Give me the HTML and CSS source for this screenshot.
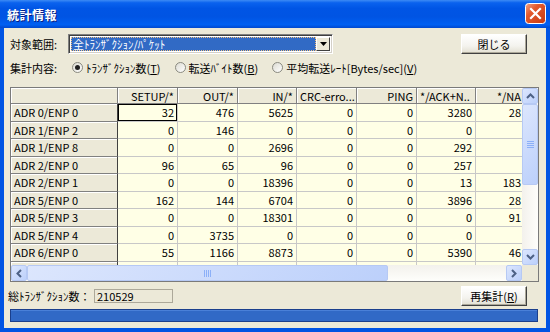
FILE: index.html
```html
<!DOCTYPE html>
<html lang="ja">
<head>
    <meta charset="UTF-8">
    <title>統計情報</title>
    <link rel="stylesheet" href="styles.css">
</head>
<body>
    <div class="window">
        <div class="titlebar">
            <span class="titlebar__text">統計情報</span>
            <span class="titlebar__close">
                <svg width="21" height="21" viewBox="0 0 21 21">
                    <defs>
                        <linearGradient id="cl" x1="0" y1="0" x2="1" y2="1">
                            <stop offset="0" stop-color="#F3A58A"/>
                            <stop offset="0.35" stop-color="#E35A2E"/>
                            <stop offset="1" stop-color="#C5380F"/>
                        </linearGradient>
                    </defs>
                    <rect x="0.5" y="0.5" width="20" height="20" rx="3" fill="url(#cl)" stroke="#fff"/>
                    <path d="M6 6 L15 15 M15 6 L6 15" stroke="#fff" stroke-width="2.2" stroke-linecap="square"/>
                </svg>
            </span>
        </div>

        <div class="body">
            <div class="row row--target">
                <span class="label">対象範囲:</span>
                <div class="combo">
                    <span class="combo__value">全ﾄﾗﾝｻﾞｸｼｮﾝ/ﾊﾟｹｯﾄ</span>
                    <span class="combo__btn">
                        <svg width="7" height="4" viewBox="0 0 7 4"><path d="M0 0 H7 L3.5 4 Z" fill="#000"/></svg>
                    </span>
                </div>
                <button class="btn">閉じる</button>
            </div>

            <div class="row row--mode">
                <span class="label">集計内容:</span>
                <div class="radios">
                    <span class="radio radio--on"><span class="radio__dot"></span>ﾄﾗﾝｻﾞｸｼｮﾝ数(<u>T</u>)</span>
                    <span class="radio"><span class="radio__dot"></span>転送ﾊﾞｲﾄ数(<u>B</u>)</span>
                    <span class="radio"><span class="radio__dot"></span>平均転送ﾚｰﾄ[Bytes/sec](<u>V</u>)</span>
                </div>
            </div>

            <div class="grid">
                <div class="grid__main">
                    <div class="grid__cells">
                        <table class="sheet">
                            <colgroup>
                                <col class="c-head"><col class="c60"><col class="c60"><col class="c59"><col class="c60"><col class="c60"><col class="c59"><col class="c-last">
                            </colgroup>
                            <thead>
                                <tr>
                                    <th class="fix"></th>
                                    <th class="fix">SETUP/*</th>
                                    <th class="fix">OUT/*</th>
                                    <th class="fix">IN/*</th>
                                    <th class="fix fix--left">CRC-erro...</th>
                                    <th class="fix">PING</th>
                                    <th class="fix fix--left">*/ACK+N..</th>
                                    <th class="fix fix--cut">*/NA</th>
                                </tr>
                            </thead>
                            <tbody>
                                <tr><th class="rh">ADR 0/ENP 0</th><td class="sel">32</td><td>476</td><td>5625</td><td>0</td><td>0</td><td>3280</td><td>28</td></tr>
                                <tr><th class="rh">ADR 1/ENP 2</th><td>0</td><td>146</td><td>0</td><td>0</td><td>0</td><td>0</td><td></td></tr>
                                <tr><th class="rh">ADR 1/ENP 8</th><td>0</td><td>0</td><td>2696</td><td>0</td><td>0</td><td>292</td><td></td></tr>
                                <tr><th class="rh">ADR 2/ENP 0</th><td>96</td><td>65</td><td>96</td><td>0</td><td>0</td><td>257</td><td></td></tr>
                                <tr><th class="rh">ADR 2/ENP 1</th><td>0</td><td>0</td><td>18396</td><td>0</td><td>0</td><td>13</td><td>183</td></tr>
                                <tr><th class="rh">ADR 5/ENP 0</th><td>162</td><td>144</td><td>6704</td><td>0</td><td>0</td><td>3896</td><td>28</td></tr>
                                <tr><th class="rh">ADR 5/ENP 3</th><td>0</td><td>0</td><td>18301</td><td>0</td><td>0</td><td>0</td><td>91</td></tr>
                                <tr><th class="rh">ADR 5/ENP 4</th><td>0</td><td>3735</td><td>0</td><td>0</td><td>0</td><td>0</td><td></td></tr>
                                <tr><th class="rh">ADR 6/ENP 0</th><td>55</td><td>1166</td><td>8873</td><td>0</td><td>0</td><td>5390</td><td>46</td></tr>
                                <tr><th class="rh"></th><td></td><td></td><td></td><td></td><td></td><td></td><td></td></tr>
                            </tbody>
                        </table>
                    </div>
                    <div class="vscroll">
                        <span class="sb-btn">
                            <svg width="9" height="6" viewBox="0 0 9 6"><path d="M1 5 L4.5 1.5 L8 5" fill="none" stroke="#4D6185" stroke-width="2"/></svg>
                        </span>
                        <span class="sb-thumb sb-thumb--v">
                            <svg width="7" height="7" viewBox="0 0 7 7"><path d="M0 0.5 H7 M0 2.5 H7 M0 4.5 H7 M0 6.5 H7" stroke="#8CB0F8"/></svg>
                        </span>
                        <span class="sb-track"></span>
                        <span class="sb-btn">
                            <svg width="9" height="6" viewBox="0 0 9 6"><path d="M1 1 L4.5 4.5 L8 1" fill="none" stroke="#4D6185" stroke-width="2"/></svg>
                        </span>
                    </div>
                </div>
                <div class="grid__foot">
                    <div class="hscroll">
                        <span class="sb-btn">
                            <svg width="6" height="9" viewBox="0 0 6 9"><path d="M5 1 L1.5 4.5 L5 8" fill="none" stroke="#4D6185" stroke-width="2"/></svg>
                        </span>
                        <span class="sb-thumb sb-thumb--h">
                            <svg width="7" height="7" viewBox="0 0 7 7"><path d="M0.5 0 V7 M2.5 0 V7 M4.5 0 V7 M6.5 0 V7" stroke="#8CB0F8"/></svg>
                        </span>
                        <span class="sb-track"></span>
                        <span class="sb-btn">
                            <svg width="6" height="9" viewBox="0 0 6 9"><path d="M1 1 L4.5 4.5 L1 8" fill="none" stroke="#4D6185" stroke-width="2"/></svg>
                        </span>
                    </div>
                    <div class="grid__corner"></div>
                </div>
            </div>

            <div class="row row--total">
                <span class="label label--total">総ﾄﾗﾝｻﾞｸｼｮﾝ数：</span>
                <span class="field">210529</span>
                <button class="btn">再集計(<u>R</u>)</button>
            </div>

            <div class="progress"></div>
        </div>
    </div>
</body>
</html>
```

FILE: styles.css
```css
:root {
    --faceColor: #ECE9D8;
    --cellColor: #FFFFE6;
    --gridLine: #C8C8C8;
    --frameColor: #0054E3;
}
* {
    box-sizing: border-box;
}
html,
body {
    margin: 0;
}
body {
    width: 550px;
    height: 332px;
    overflow: hidden;
    font-family: "Noto Sans CJK JP", sans-serif;
    font-size: 11px;
    color: #000;
}

.window {
    display: flex;
    flex-direction: column;
    width: 550px;
    height: 332px;
    background: var(--frameColor);
}

.titlebar {
    display: flex;
    align-items: center;
    height: 28px;
    padding: 0 4px 0 7px;
    background: linear-gradient(#3D8BF5 0%, #0A62EE 10%, #0055E5 30%, #0054E3 60%, #0060F2 88%, #0048CF 100%);
    color: #fff;
}

.titlebar__text {
    font-size: 12px;
    font-weight: bold;
    letter-spacing: 0.5px;
    text-shadow: 1px 1px 0 #0A1E80;
}

.titlebar__close {
    display: flex;
    margin-left: auto;
    margin-top: -2px;
}

.body {
    flex: 1;
    display: flex;
    flex-direction: column;
    margin: 0 4px 4px;
    padding: 6px 7px 6px 6px;
    background: var(--faceColor);
}

.row {
    display: flex;
    align-items: center;
}

.row--target {
    height: 20px;
}

.row--mode {
    height: 17px;
    margin-top: 5px;
}

.row--total {
    height: 20px;
    margin-top: 4px;
}

.label {
    width: 58px;
    white-space: nowrap;
}

.label--total {
    width: 86px;
    margin-left: -2px;
}

.combo {
    display: flex;
    width: 265px;
    height: 20px;
    padding: 2px;
    background: #fff;
    border: 1px solid;
    border-color: #808080 #fff #fff #808080;
    box-shadow: inset 1px 1px 0 #404040, inset -1px -1px 0 #D4D0C8;
}

.combo__value {
    flex: 1;
    display: flex;
    align-items: center;
    padding-left: 2px;
    background: #316AC5;
    color: #fff;
    outline: 1px dotted #F0C080;
    outline-offset: -1px;
    white-space: nowrap;
}

.combo__btn {
    display: flex;
    align-items: center;
    justify-content: center;
    width: 14px;
    background: var(--faceColor);
    border: 1px solid;
    border-color: #fff #404040 #404040 #fff;
}

.btn {
    display: flex;
    align-items: center;
    justify-content: center;
    width: 66px;
    height: 20px;
    margin-left: auto;
    margin-right: 12px;
    padding: 0;
    font: inherit;
    background: linear-gradient(#FFFFFF, #F4F3EE 60%, #E3E0D2);
    border: 1px solid;
    border-color: #fff #404040 #404040 #fff;
    box-shadow: inset -1px -1px 0 #ACA899;
    color: #000;
}

.radios {
    display: flex;
    gap: 14px;
    margin-left: 4px;
}

.radio {
    display: flex;
    align-items: center;
    white-space: nowrap;
}

.radio__dot {
    position: relative;
    width: 11px;
    height: 11px;
    margin-right: 3px;
    border-radius: 50%;
    background: linear-gradient(135deg, #DCDBD2, #fff);
    border: 1px solid #8A8A80;
}

.radio--on .radio__dot::after {
    position: absolute;
    content: '';
    top: 2px;
    left: 2px;
    width: 5px;
    height: 5px;
    border-radius: 50%;
    background: #202020;
}

.grid {
    display: flex;
    flex-direction: column;
    width: 529px;
    height: 195px;
    margin-top: 11px;
    border: 1px solid #7A7A7A;
}

.grid__main {
    display: flex;
    height: 177px;
}

.grid__cells {
    width: 511px;
    overflow: hidden;
}

.sheet {
    width: 514px;
    table-layout: fixed;
    border-collapse: separate;
    border-spacing: 0;
}

.sheet .c-head { width: 107px; }
.sheet .c60 { width: 60px; }
.sheet .c59 { width: 59px; }
.sheet .c-last { width: 49px; }

.sheet th,
.sheet td {
    padding: 0 3px;
    overflow: hidden;
    white-space: nowrap;
    font-weight: normal;
    line-height: 14px;
}

.sheet thead th {
    height: 16px;
}

.sheet tbody tr {
    height: 17.5px;
}

.fix {
    text-align: right;
    background: var(--faceColor);
    border-right: 1px solid #808080;
    border-bottom: 1px solid #808080;
    box-shadow: inset 1px 1px 0 #fff;
}

.fix--left {
    text-align: left;
    padding-left: 2px;
}

.fix--cut {
    padding-right: 0;
}

.rh {
    text-align: left;
    padding-left: 6px;
    background: var(--faceColor);
    border-right: 1px solid #404040;
    border-bottom: 1px solid #808080;
    box-shadow: inset 1px 1px 0 #fff;
}

.sheet td {
    text-align: right;
    background: var(--cellColor);
    border-right: 1px solid var(--gridLine);
    border-bottom: 1px solid var(--gridLine);
}

.sheet td.sel {
    box-shadow: inset 0 0 0 1px #000;
}

.vscroll,
.hscroll {
    display: flex;
    background: linear-gradient(90deg, #F3F1EC, #FEFEFB);
}

.vscroll {
    flex-direction: column;
    width: 16px;
}

.hscroll {
    flex: 1;
    background: linear-gradient(#F3F1EC, #FEFEFB);
}

.sb-btn,
.sb-thumb {
    display: flex;
    align-items: center;
    justify-content: center;
    border: 1px solid #B6C9F4;
    border-radius: 2px;
    background: linear-gradient(135deg, #DCE6FD, #BCD0FB);
}

.sb-btn {
    width: 16px;
    height: 16px;
    flex: none;
}

.sb-thumb--v {
    height: 81px;
}

.sb-thumb--h {
    width: 361px;
}

.sb-track {
    flex: 1;
}

.grid__foot {
    display: flex;
    height: 16px;
}

.grid__corner {
    width: 16px;
    background: var(--faceColor);
}

.field {
    display: flex;
    align-items: center;
    width: 79px;
    height: 14px;
    padding-left: 2px;
    border: 1px solid #ACA899;
    background: var(--faceColor);
}

.progress {
    width: 528px;
    height: 13px;
    margin-top: 3px;
    border: 1px solid #1B3F8C;
    background: #3169C6;
    box-shadow: inset 0 1px 0 #4A80D8;
}
```
